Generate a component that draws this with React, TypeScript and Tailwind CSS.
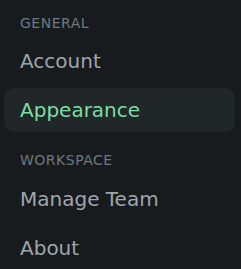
import React from "react";

const font = { fontFamily: '"DejaVu Sans", "Liberation Sans", sans-serif' };

function Label({ children, className = "" }: { children: React.ReactNode; className?: string }) {
  return (
    <div className={`h-5 pl-4 text-[14px] leading-5 uppercase tracking-[0.5px] text-[#6d7880] ${className}`}>
      {children}
    </div>
  );
}

function Item({ children, active = false, className = "" }: { children: React.ReactNode; active?: boolean; className?: string }) {
  return (
    <div
      className={`flex h-[44px] items-center rounded-[10px] pl-4 text-[20px] leading-none ${
        active ? "bg-[#212629] text-[#7adea3]" : "text-[#9ea6ab]"
      } ${className}`}
    >
      {children}
    </div>
  );
}

export default function App() {
  return (
    <div className="h-[269px] w-[241px] overflow-hidden bg-[#181b1e] pl-1 pr-[6px] pt-[13px]" style={font}>
      <div className="flex flex-col">
        <Label>General</Label>
        <Item className="mt-[6px]">Account</Item>
        <Item active className="mt-[5px]">Appearance</Item>
        <Label className="mt-[18px]">Workspace</Label>
        <Item className="mt-[7px]">Manage Team</Item>
        <Item className="mt-[5px]">About</Item>
      </div>
    </div>
  );
}
